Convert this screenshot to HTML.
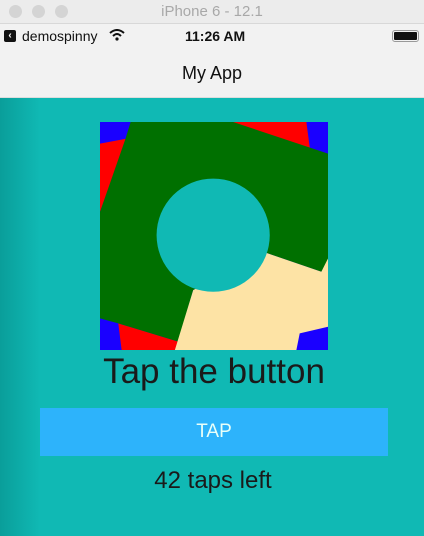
<!DOCTYPE html>
<html><head><style>
*{margin:0;padding:0;box-sizing:border-box}
body{width:424px;height:536px;overflow:hidden;position:relative;background:#10b9b4;font-family:"Liberation Sans",sans-serif}
.abs{position:absolute}
.title{left:0;top:0;width:424px;height:24px;background:#ececec;border-bottom:1px solid #d8d8d8;text-align:center;font-size:15px;color:#a8a8a8;line-height:24px}
.dot{width:13px;height:13px;border-radius:50%;background:#d4d4d4;top:5px}
.bar{left:0;top:24px;width:424px;height:74px;background:#f2f2f2;border-bottom:1px solid #ddd}
.shade{left:0;top:98px;width:40px;height:438px;background:linear-gradient(90deg,#0a9e9a,#10b9b4)}
</style></head><body>
<div class="abs title">iPhone 6 - 12.1</div>
<div class="abs dot" style="left:9px"></div>
<div class="abs dot" style="left:32px"></div>
<div class="abs dot" style="left:55px"></div>
<div class="abs bar"></div>
<div class="abs" style="left:4px;top:30px;width:12px;height:12px;background:#111;border-radius:2px;color:#fff;font-size:10px;line-height:12px;text-align:center;font-weight:bold">‹</div>
<div class="abs" style="left:22px;top:28px;font-size:14px;color:#111">demospinny</div>
<svg class="abs" style="left:109px;top:29px" width="16" height="12" viewBox="0 0 16 12"><path d="M1 4 Q8 -2 15 4" stroke="#111" stroke-width="2" fill="none"/><path d="M4 7 Q8 3 12 7" stroke="#111" stroke-width="2" fill="none"/><circle cx="8" cy="10" r="1.6" fill="#111"/></svg>
<div class="abs" style="left:185px;top:28px;font-size:14px;font-weight:bold;color:#111">11:26 AM</div>
<div class="abs" style="left:392px;top:30px;width:27px;height:12px;border:1px solid #999;border-radius:3px;padding:1px"><div style="width:100%;height:100%;background:#111;border-radius:1px"></div></div>
<div class="abs" style="left:0;top:63px;width:424px;text-align:center;font-size:18px;color:#111">My App</div>
<div class="abs shade"></div>
<svg class="abs" style="left:100px;top:122px" width="228" height="228" viewBox="30 20 685 685">
<rect x="30" y="20" width="685" height="685" fill="#1a00ff"/>
<polygon points="30,85 110,70 30,290" fill="#ff0000"/>
<polygon points="420,20 650,20 662,110" fill="#ff0000"/>
<polygon points="85,625 265,680 255,705 95,705" fill="#ff0000"/>
<polygon points="122,20 430,20 715,115 715,440 695,470 520,410 310,525 265,680 85,625 30,610 30,290 105,75" fill="#007000"/>
<polygon points="520,410 695,470 715,430 715,635 630,655 620,705 255,705 310,525" fill="#fde3a5"/>
<circle cx="370" cy="360" r="170" fill="#10b9b4"/>
</svg>
<div class="abs" style="left:0;top:352px;width:424px;text-align:center;font-size:35px;color:#1a1a1a;padding-left:4px">Tap the button</div>
<div class="abs" style="left:40px;top:408px;width:348px;height:48px;background:#2db3fb;color:#e8fff8;text-align:center;line-height:48px;font-size:19px">TAP</div>
<div class="abs" style="left:0;top:467px;width:424px;text-align:center;font-size:24px;color:#1a1a1a;padding-left:2px">42 taps left</div>
</body></html>
